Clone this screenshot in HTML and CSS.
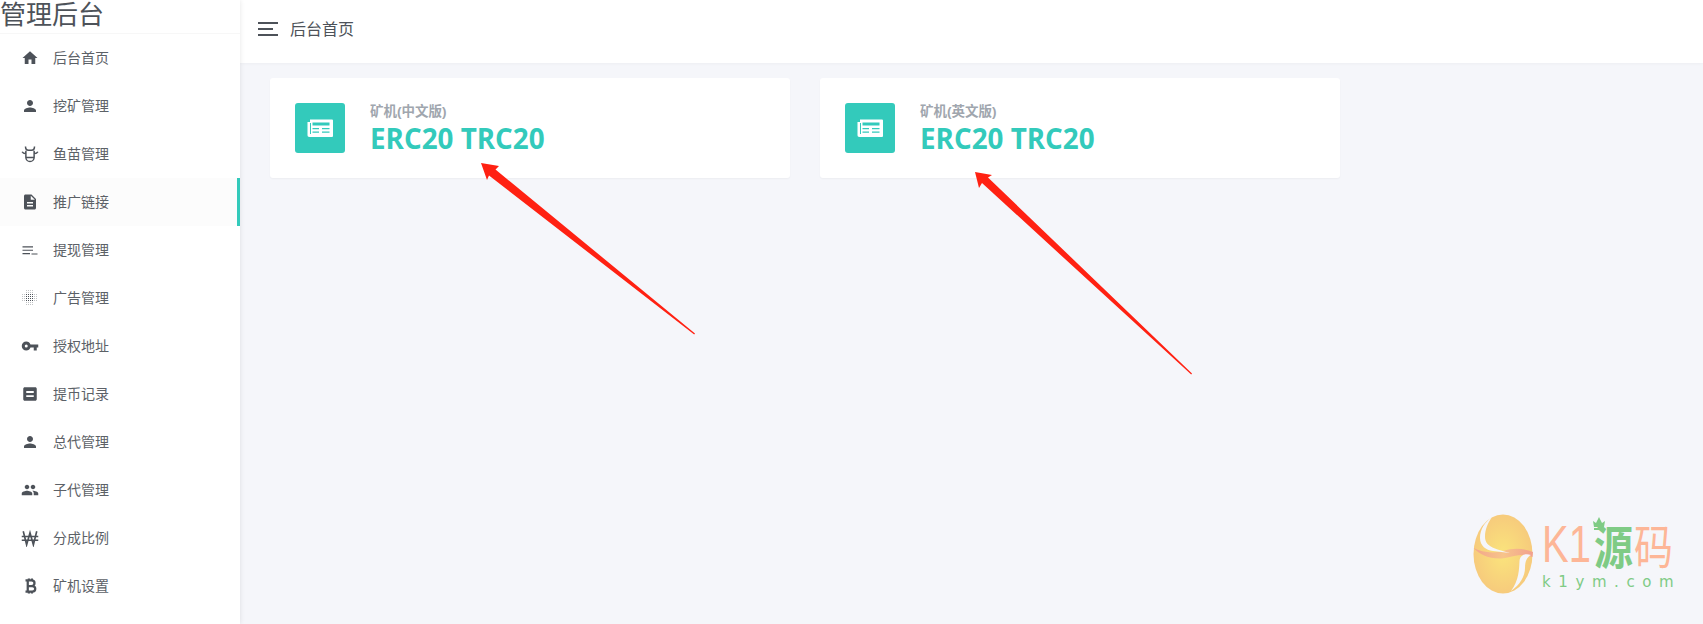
FILE: index.html
```html
<!DOCTYPE html>
<html lang="zh-CN">
<head>
    <meta charset="UTF-8">
    <title>管理后台</title>
    <link rel="stylesheet" href="styles.css">
</head>
<body>
    <div class="sidebar">
        <div class="logo">管理后台</div>
        <ul class="menu">
            <li class="menu-item">
                <svg class="menu-icon" viewBox="0 0 24 24"><path d="M10 20v-6h4v6h5v-8h3L12 3 2 12h3v8z"/></svg>
                <span>后台首页</span>
            </li>
            <li class="menu-item">
                <svg class="menu-icon" viewBox="0 0 24 24"><path d="M12 12c2.200 0 4-1.800 4-4s-1.800-4-4-4-4 1.800-4 4 1.800 4 4 4zm0 2c-2.700 0-8 1.300-8 4v2h16v-2c0-2.700-5.300-4-8-4z"/></svg>
                <span>挖矿管理</span>
            </li>
            <li class="menu-item">
                <svg class="menu-icon" viewBox="0 0 24 24"><path class="line" stroke-width="2" d="M6 2c0 3 1.500 5 4 5h4c2.500 0 4-2 4-5M1.500 9c1 2 3 2.500 5 2.500M22.500 9c-1 2-3 2.500-5 2.500M6.500 7.500v9c0 3 2.500 5.500 5.500 5.500s5.500-2.500 5.500-5.500v-9M7 16.500h10"/></svg>
                <span>鱼苗管理</span>
            </li>
            <li class="menu-item active">
                <svg class="menu-icon" viewBox="0 0 24 24"><path d="M14 2H6c-1.100 0-2 .9-2 2v16c0 1.100.9 2 2 2h12c1.100 0 2-.9 2-2V8l-6-6zm2 16H8v-2h8v2zm0-4H8v-2h8v2zm-3-5V3.500L18.500 9H13z"/></svg>
                <span>推广链接</span>
            </li>
            <li class="menu-item">
                <svg class="menu-icon" viewBox="0 0 24 24"><path d="M2 7h14v1.500H2zM2 11.500h14V13H2zM2 16h10v1.500H2zM14 16.500h8V18h-8z"/></svg>
                <span>提现管理</span>
            </li>
            <li class="menu-item">
                <svg class="menu-icon" viewBox="0 0 18 18">
                    <path class="line faint" stroke-dasharray="1 1" d="M1 5.500h16M1 7.500h16M1 9.500h16M1 11.500h16M5 1.500h8M5 3.500h8M5 13.500h8M5 15.500h8"/>
                    <path class="line" stroke-dasharray="1 1" d="M5 5.500h8M5 7.500h8M5 9.500h8M5 11.500h8"/>
                </svg>
                <span>广告管理</span>
            </li>
            <li class="menu-item">
                <svg class="menu-icon" viewBox="0 0 24 24"><path d="M12.650 10A6 6 0 0 0 7 6a6 6 0 0 0 0 12 6 6 0 0 0 5.650-4H17v4h4v-4h2v-4H12.650zM7 14a2 2 0 1 1 0-4 2 2 0 0 1 0 4z"/></svg>
                <span>授权地址</span>
            </li>
            <li class="menu-item">
                <svg class="menu-icon" viewBox="0 0 24 24"><path fill-rule="evenodd" d="M19 3H5c-1.100 0-2 .9-2 2v14c0 1.100.9 2 2 2h14c1.100 0 2-.9 2-2V5c0-1.100-.9-2-2-2zM7 8h10v2.500H7zm0 5.500h10V16H7z"/></svg>
                <span>提币记录</span>
            </li>
            <li class="menu-item">
                <svg class="menu-icon" viewBox="0 0 24 24"><path d="M12 12c2.200 0 4-1.800 4-4s-1.800-4-4-4-4 1.800-4 4 1.800 4 4 4zm0 2c-2.700 0-8 1.300-8 4v2h16v-2c0-2.700-5.300-4-8-4z"/></svg>
                <span>总代管理</span>
            </li>
            <li class="menu-item">
                <svg class="menu-icon" viewBox="0 0 24 24"><path d="M16 11c1.700 0 3-1.300 3-3s-1.300-3-3-3-3 1.300-3 3 1.300 3 3 3zm-8 0c1.700 0 3-1.300 3-3S9.700 5 8 5 5 6.300 5 8s1.300 3 3 3zm0 2c-2.300 0-7 1.200-7 3.500V19h14v-2.500C15 14.200 10.300 13 8 13zm8 0c-.3 0-.6 0-1 .1 1.200.8 2 2 2 3.400V19h6v-2.500c0-2.300-4.700-3.500-7-3.500z"/></svg>
                <span>子代管理</span>
            </li>
            <li class="menu-item">
                <svg class="menu-icon" viewBox="0 0 24 24"><path class="line" stroke-width="2.200" d="M3 3l4.500 18L12 5l4.500 16L21 3M1 10h22M1 15h22"/></svg>
                <span>分成比例</span>
            </li>
            <li class="menu-item">
                <svg class="menu-icon" viewBox="0 0 24 24"><path class="line" stroke-width="3" d="M6 4.500h8c2.500 0 4 1.300 4 3.500s-1.500 4-4 4H9m0 0h6c2.500 0 4 1.500 4 3.700s-1.500 3.800-4 3.800H6M9 4.500v15M10.500 2v3M14.500 2v3M10.500 19v3M14.500 19v3"/></svg>
                <span>矿机设置</span>
            </li>
        </ul>
    </div>

    <div class="main">
        <div class="topbar">
            <div class="burger"><i></i><i class="short"></i><i></i></div>
            <span class="page-title">后台首页</span>
        </div>
        <div class="content">
            <div class="card">
                <div class="card-icon">
                    <svg viewBox="0 0 26 18"><path fill="#fff" d="M3 .5h22a1 1 0 0 1 1 1V17a1 1 0 0 1-1 1H2.500C1 18 .5 17 .5 16V3H3z"/><path fill="#33cabb" d="M5.500 3.500h17v3h-17zM5.500 9H12v1.200H5.500zM15 9h7.500v1.200H15zM5.500 12.500H12v1.200H5.500zM15 12.500h7.500v1.200H15zM3 4h1v11H3z"/></svg>
                </div>
                <div class="card-text">
                    <div class="card-label">矿机(中文版)</div>
                    <div class="card-value">ERC20 TRC20</div>
                </div>
            </div>
            <div class="card">
                <div class="card-icon">
                    <svg viewBox="0 0 26 18"><path fill="#fff" d="M3 .5h22a1 1 0 0 1 1 1V17a1 1 0 0 1-1 1H2.500C1 18 .5 17 .5 16V3H3z"/><path fill="#33cabb" d="M5.500 3.500h17v3h-17zM5.500 9H12v1.200H5.500zM15 9h7.500v1.200H15zM5.500 12.500H12v1.200H5.500zM15 12.500h7.500v1.200H15zM3 4h1v11H3z"/></svg>
                </div>
                <div class="card-text">
                    <div class="card-label">矿机(英文版)</div>
                    <div class="card-value">ERC20 TRC20</div>
                </div>
            </div>
        </div>
    </div>

    <!-- red arrows drawn over the screenshot -->
    <svg class="arrows" viewBox="0 0 1703 624">
        <path fill="#ff2112" d="M481 163l18 3-3.500 3.500L695 333.500l-.8 1L489 175.500l-2 4.500z"/>
        <path fill="#ff2112" d="M975 172l17 3-4 2.500L1192 373.500l-.8 1L982 183l-3 5z"/>
    </svg>

    <div class="watermark">
        <svg class="wm-egg" viewBox="0 0 60 80">
            <defs>
                <radialGradient id="eggFill" cx="50%" cy="50%" r="60%">
                    <stop offset="0" stop-color="#fae47c"/>
                    <stop offset="1" stop-color="#f6c67c"/>
                </radialGradient>
                <linearGradient id="bandFill" x1="0" x2="1" y1="0" y2="0">
                    <stop offset="0" stop-color="#f3a58c"/>
                    <stop offset=".5" stop-color="#f7c48a"/>
                    <stop offset="1" stop-color="#f2a08e"/>
                </linearGradient>
            </defs>
            <ellipse cx="30" cy="40" rx="29.500" ry="39.500" fill="url(#eggFill)"/>
            <path fill="url(#bandFill)" d="M.5 34C8 42 20 46 32 44c10-2 18-5 27.500-1l.5-5c-10-4-20-4-30-1-10 3-22 1-29.500-3z"/>
            <path fill="#f5f6fa" d="M19 3C12 8 7 15 7 24c0 8 6 12 13 13l17 2c-7-2-12-3-15-4.500C15 32 12 28 12 23c0-8 3-14 7-20z"/>
            <path fill="#f5f6fa" d="M58 41c-6-2-11 0-11.500 6-.5 9-.5 19-8.500 30 9-6 14-15 14-23 0-7 2-11 6-13z"/>
        </svg>
        <div class="wm-text">
            <div class="wm-name">
                <span class="wm-latin">K1</span><span class="wm-yuan">源</span><span class="wm-ma">码</span>
                <svg class="wm-crown" viewBox="0 0 14 14"><path fill="#7fcb85" d="M2 12h10v2H2zM1 5l3 2 3-6 3 6 3-2-1 6H2z"/></svg>
            </div>
            <div class="wm-url">k1ym.com</div>
        </div>
    </div>
</body>
</html>
```

FILE: styles.css
```css
* {
    margin: 0;
    padding: 0;
    box-sizing: border-box;
}

body {
    font-family: "Liberation Sans", "Noto Sans CJK SC", sans-serif;
    background: #f5f6fa;
    height: 624px;
    overflow: hidden;
    display: flex;
    color: #4d5259;
}

.sidebar {
    width: 240px;
    height: 624px;
    flex-shrink: 0;
    background: #fff;
    box-shadow: 0 0 5px rgba(0,0,0,0.1);
    position: relative;
    z-index: 2;
}

.logo {
    height: 34px;
    font-size: 26px;
    line-height: 30px;
    border-bottom: 1px solid #f7f7f7;
}

.menu {
    list-style: none;
}

.menu-item {
    height: 48px;
    display: flex;
    align-items: center;
    padding-left: 21px;
    gap: 14px;
    font-size: 14px;
}

.menu-item span {
    color: #5c6167;
    padding-bottom: 2px;
}

.menu-item.active {
    background: #fcfcfc;
    border-right: 3px solid #33cabb;
}

.menu-icon {
    width: 18px;
    height: 18px;
    fill: #4d5259;
}

.menu-icon .line {
    fill: none;
    stroke: #4d5259;
}

.menu-icon .faint {
    opacity: 0.35;
}

.main {
    flex: 1;
    min-width: 0;
}

.topbar {
    height: 63px;
    background: #fff;
    display: flex;
    align-items: center;
    padding: 0 0 6px 18px;
    gap: 12px;
    box-shadow: 0 1px 3px rgba(0,0,0,0.03);
}

.burger {
    width: 20px;
    display: flex;
    flex-direction: column;
    gap: 4px;
}

.burger i {
    display: block;
    height: 2px;
    background: #4d5259;
}

.burger i.short {
    width: 15px;
}

.page-title {
    font-size: 16px;
    color: #4d5259;
    padding-bottom: 1px;
}

.content {
    display: flex;
    gap: 30px;
    padding: 15px 0 0 30px;
}

.card {
    width: 520px;
    height: 100px;
    background: #fff;
    border-radius: 3px;
    box-shadow: 0 1px 2px rgba(0,0,0,0.04);
    display: flex;
    align-items: center;
    padding-left: 25px;
    gap: 25px;
}

.card-icon {
    width: 50px;
    height: 50px;
    background: #33cabb;
    border-radius: 3px;
    display: flex;
    align-items: center;
    justify-content: center;
}

.card-icon svg {
    width: 26px;
    height: 18px;
}

.card-text {
    margin-top: 4px;
}

.card-label {
    font-size: 13.500px;
    font-weight: 700;
    color: #a0a6ae;
    line-height: 16px;
}

.card-value {
    font-family: "Open Sans", "Liberation Sans", sans-serif;
    font-size: 27.800px;
    font-weight: 700;
    line-height: 36px;
    color: #33cabb;
}

.arrows {
    position: absolute;
    left: 0;
    top: 0;
    width: 1703px;
    height: 624px;
    z-index: 3;
    pointer-events: none;
}

.watermark {
    position: absolute;
    left: 1473px;
    top: 514px;
    display: flex;
    gap: 9px;
}

.wm-egg {
    width: 60px;
    height: 80px;
}

.wm-name {
    position: relative;
    display: flex;
    align-items: center;
    height: 52px;
    margin-top: 4px;
    font-size: 39px;
    white-space: nowrap;
}

.wm-latin {
    display: inline-block;
    width: 52px;
    font-size: 40px;
    color: #fdb697;
    transform: scaleY(1.3);
}

.wm-yuan {
    display: inline-block;
    font-weight: 700;
    color: #7fcb85;
    transform: scaleY(1.2);
    margin-right: 1px;
}

.wm-ma {
    display: inline-block;
    color: #fdb697;
    transform: scaleY(1.2);
}

.wm-crown {
    position: absolute;
    left: 50px;
    top: -2px;
    width: 14px;
    height: 14px;
}

.wm-url {
    font-family: "DejaVu Sans", sans-serif;
    font-size: 15px;
    letter-spacing: 7.600px;
    color: #7fcb85;
    white-space: nowrap;
    margin-top: 3px;
}
```
